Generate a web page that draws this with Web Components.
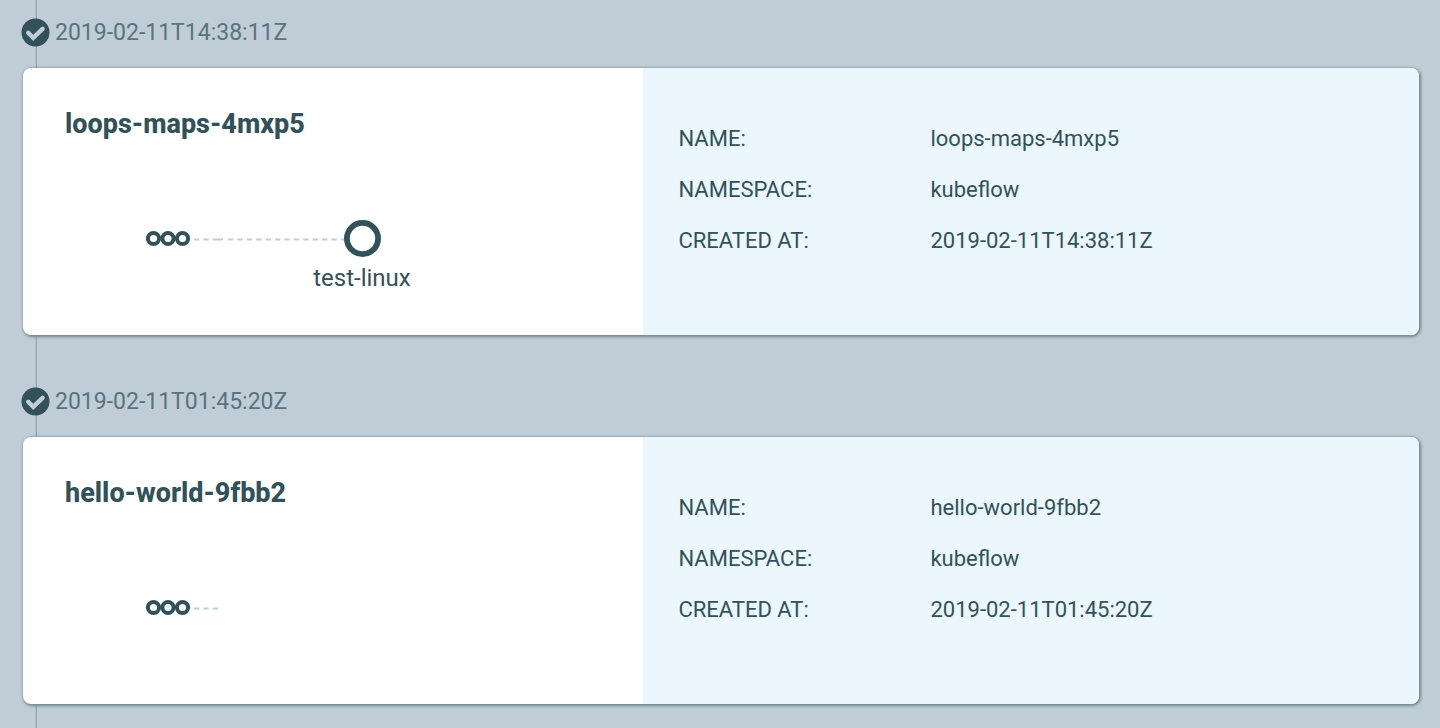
<!DOCTYPE html>
<html lang="en">
<head>
<meta charset="utf-8">
<meta name="viewport" content="width=device-width, initial-scale=1">
<title>Workflow timeline</title>
<style>
  html, body { margin: 0; background: #c0cdd6; }
  body { font-family: Roboto, "Liberation Sans", sans-serif; color: #31525a; }
</style>
</head>
<body>
<workflow-timeline>
  <workflow-entry name="loops-maps-4mxp5" namespace="kubeflow" created="2019-02-11T14:38:11Z" step="test-linux"></workflow-entry>
  <workflow-entry name="hello-world-9fbb2" namespace="kubeflow" created="2019-02-11T01:45:20Z"></workflow-entry>
</workflow-timeline>

<template id="timeline">
  <style>
    :host { display: block; padding: 0 21px 0 23px; background: linear-gradient(90deg, #b0c0c9 50%, #94a8b2 50%) 35px 0 / 2px 100% no-repeat; }
  </style>
  <slot></slot>
</template>

<template id="entry">
  <style>
    :host { display: block; padding-bottom: 34px; }
    :host(:last-child) { padding-bottom: 24px; }
    header { display: flex; align-items: center; gap: 5px; height: 64px; margin: 0 0 4px -2px; font-size: 23px; line-height: 30px; font-weight: 400; color: #58747f; }
    header svg { display: block; width: 29px; height: 29px; flex: none; }
    time { padding-top: 1px; }
  </style>
  <header>
    <svg viewBox="0 0 29 29" aria-hidden="true">
      <circle cx="14.5" cy="14.5" r="14" fill="#31525a"/>
      <path d="M7.2 14.8l5 5L21.6 10.8" fill="none" stroke="#c0cdd6" stroke-width="4.4" stroke-linecap="round"/>
    </svg>
    <time></time>
  </header>
  <workflow-card>
    <span slot="title"></span>
    <workflow-graph slot="graph"></workflow-graph>
    <workflow-facts slot="facts"></workflow-facts>
  </workflow-card>
</template>

<template id="card">
  <style>
    :host { display: grid; grid-template-columns: 4fr 5fr; min-height: 267px; border-radius: 8px; overflow: hidden; background: #fff; box-shadow: 1px 1px 3px 1px #6d8792; }
    .summary { padding: 40px 42px 0; }
    h2 { margin: 0 0 80px; font-size: 27px; line-height: 32px; font-weight: 800; }
    .details { background: #ebf6fd; padding: 45px 35px 0; }
  </style>
  <section class="summary">
    <h2><slot name="title"></slot></h2>
    <slot name="graph"></slot>
  </section>
  <section class="details"><slot name="facts"></slot></section>
</template>

<template id="graph">
  <style>
    :host { display: block; padding-left: 80px; }
    svg { display: block; width: 280px; height: 76px; }
    .ring { fill: none; stroke: #31525a; }
    .edge { stroke: #bcd0d9; stroke-width: 2; stroke-dasharray: 5.4 4; }
    text { font-size: 24px; fill: #31525a; text-anchor: middle; }
    :host(:not([step])) .next { display: none; }
  </style>
  <svg viewBox="0 0 280 76" role="img" aria-label="Workflow steps">
    <g class="ring" stroke-width="4">
      <circle cx="8.5" cy="18.5" r="5.6"/>
      <circle cx="23" cy="18.5" r="5.6"/>
      <circle cx="37.5" cy="18.5" r="5.6"/>
    </g>
    <path class="edge" d="M49 19.5H74"/>
    <g class="next">
      <path class="edge" d="M73 19.5H78"/>
      <path class="edge" d="M83 19.5H200"/>
      <circle class="ring" cx="217.5" cy="18.5" r="15.6" stroke-width="5.8"/>
      <text x="217" y="66"></text>
    </g>
  </svg>
</template>

<template id="facts">
  <style>
    :host { display: block; }
    table { width: 100%; table-layout: fixed; border-collapse: collapse; font-size: 22px; line-height: 26px; }
    tr { height: 51px; }
    th, td { padding: 0; text-align: left; font-weight: 400; }
    th { width: 252px; }
  </style>
  <table>
    <tr><th scope="row">NAME:</th><td class="name"></td></tr>
    <tr><th scope="row">NAMESPACE:</th><td class="namespace"></td></tr>
    <tr><th scope="row">CREATED AT:</th><td class="created"></td></tr>
  </table>
</template>

<script>
  class TemplateElement extends HTMLElement {
    constructor() {
      super();
      const template = document.getElementById(this.constructor.templateId);
      this.attachShadow({ mode: "open" }).append(template.content.cloneNode(true));
    }
    find(selector) { return this.shadowRoot.querySelector(selector); }
  }

  class WorkflowTimeline extends TemplateElement { static templateId = "timeline"; }
  class WorkflowCard extends TemplateElement { static templateId = "card"; }

  class WorkflowGraph extends TemplateElement {
    static templateId = "graph";
    static observedAttributes = ["step"];
    attributeChangedCallback(name, old, value) { this.find("text").textContent = value || ""; }
  }

  class WorkflowFacts extends TemplateElement {
    static templateId = "facts";
    static observedAttributes = ["name", "namespace", "created"];
    attributeChangedCallback(name, old, value) { this.find("." + name).textContent = value; }
  }

  class WorkflowEntry extends TemplateElement {
    static templateId = "entry";
    connectedCallback() {
      const created = this.getAttribute("created");
      const time = this.find("time");
      time.dateTime = created;
      time.textContent = created;
      this.find("[slot=title]").textContent = this.getAttribute("name");
      if (this.hasAttribute("step")) this.find("workflow-graph").setAttribute("step", this.getAttribute("step"));
      for (const key of ["name", "namespace", "created"]) {
        this.find("workflow-facts").setAttribute(key, this.getAttribute(key));
      }
    }
  }

  customElements.define("workflow-timeline", WorkflowTimeline);
  customElements.define("workflow-card", WorkflowCard);
  customElements.define("workflow-graph", WorkflowGraph);
  customElements.define("workflow-facts", WorkflowFacts);
  customElements.define("workflow-entry", WorkflowEntry);
</script>
</body>
</html>
